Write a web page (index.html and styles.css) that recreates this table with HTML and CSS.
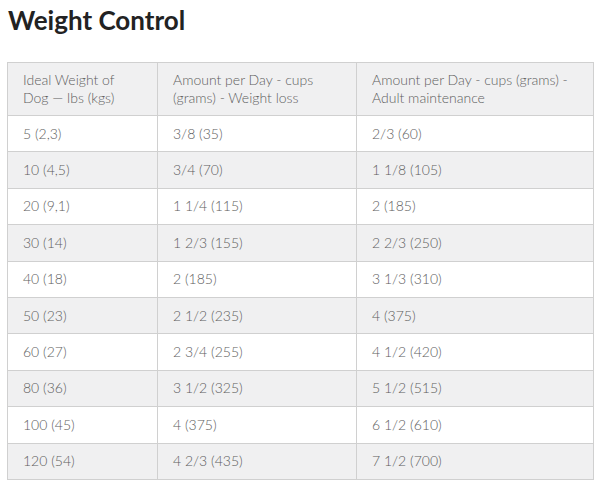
FILE: index.html
```html
<!DOCTYPE html>
<html>
<head>
<meta charset="utf-8">
<link rel="stylesheet" href="styles.css">
</head>
<body>
<div class="page">
  <h1 class="title">Weight Control</h1>
  <table class="feed">
    <colgroup>
      <col class="c1"><col class="c2"><col class="c3">
    </colgroup>
    <thead>
      <tr>
        <th>Ideal Weight of<br>Dog — lbs (kgs)</th>
        <th>Amount per Day - cups<br>(grams) - Weight loss</th>
        <th>Amount per Day - cups (grams) -<br>Adult maintenance</th>
      </tr>
    </thead>
    <tbody>
      <tr><td>5 (2,3)</td><td>3/8 (35)</td><td>2/3 (60)</td></tr>
      <tr><td>10 (4,5)</td><td>3/4 (70)</td><td>1 1/8 (105)</td></tr>
      <tr><td>20 (9,1)</td><td>1 1/4 (115)</td><td>2 (185)</td></tr>
      <tr><td>30 (14)</td><td>1 2/3 (155)</td><td>2 2/3 (250)</td></tr>
      <tr><td>40 (18)</td><td>2 (185)</td><td>3 1/3 (310)</td></tr>
      <tr><td>50 (23)</td><td>2 1/2 (235)</td><td>4 (375)</td></tr>
      <tr><td>60 (27)</td><td>2 3/4 (255)</td><td>4 1/2 (420)</td></tr>
      <tr><td>80 (36)</td><td>3 1/2 (325)</td><td>5 1/2 (515)</td></tr>
      <tr><td>100 (45)</td><td>4 (375)</td><td>6 1/2 (610)</td></tr>
      <tr><td>120 (54)</td><td>4 2/3 (435)</td><td>7 1/2 (700)</td></tr>
    </tbody>
  </table>
</div>
</body>
</html>
```
FILE: styles.css
```css
html, body {
  margin: 0;
  padding: 0;
  background: #ffffff;
}
.page {
  padding: 5px 7px 0 7px;
  font-family: Lato, "Open Sans", sans-serif;
}
.title {
  margin: 0 0 0 1px;
  font-size: 26px;
  line-height: 30px;
  font-weight: 700;
  color: #222222;
}
.feed {
  margin-top: 27px;
  width: 586px;
  border-collapse: collapse;
  table-layout: fixed;
  font-size: 14px;
  color: #5e5e5e;
}
.c1 { width: 150px; }
.c2 { width: 199px; }
.c3 { width: 237px; }
.feed th,
.feed td {
  border: 1px solid #d0d0d0;
  text-align: left;
  font-weight: 300;
  padding: 0 15px;
  vertical-align: middle;
}
.feed th {
  height: 52px;
  line-height: 18px;
  background: #f0f0f1;
}
.feed td {
  height: 35.4px;
  line-height: 18px;
}
.feed tbody tr:nth-child(even) td {
  background: #f0f0f1;
}
```
